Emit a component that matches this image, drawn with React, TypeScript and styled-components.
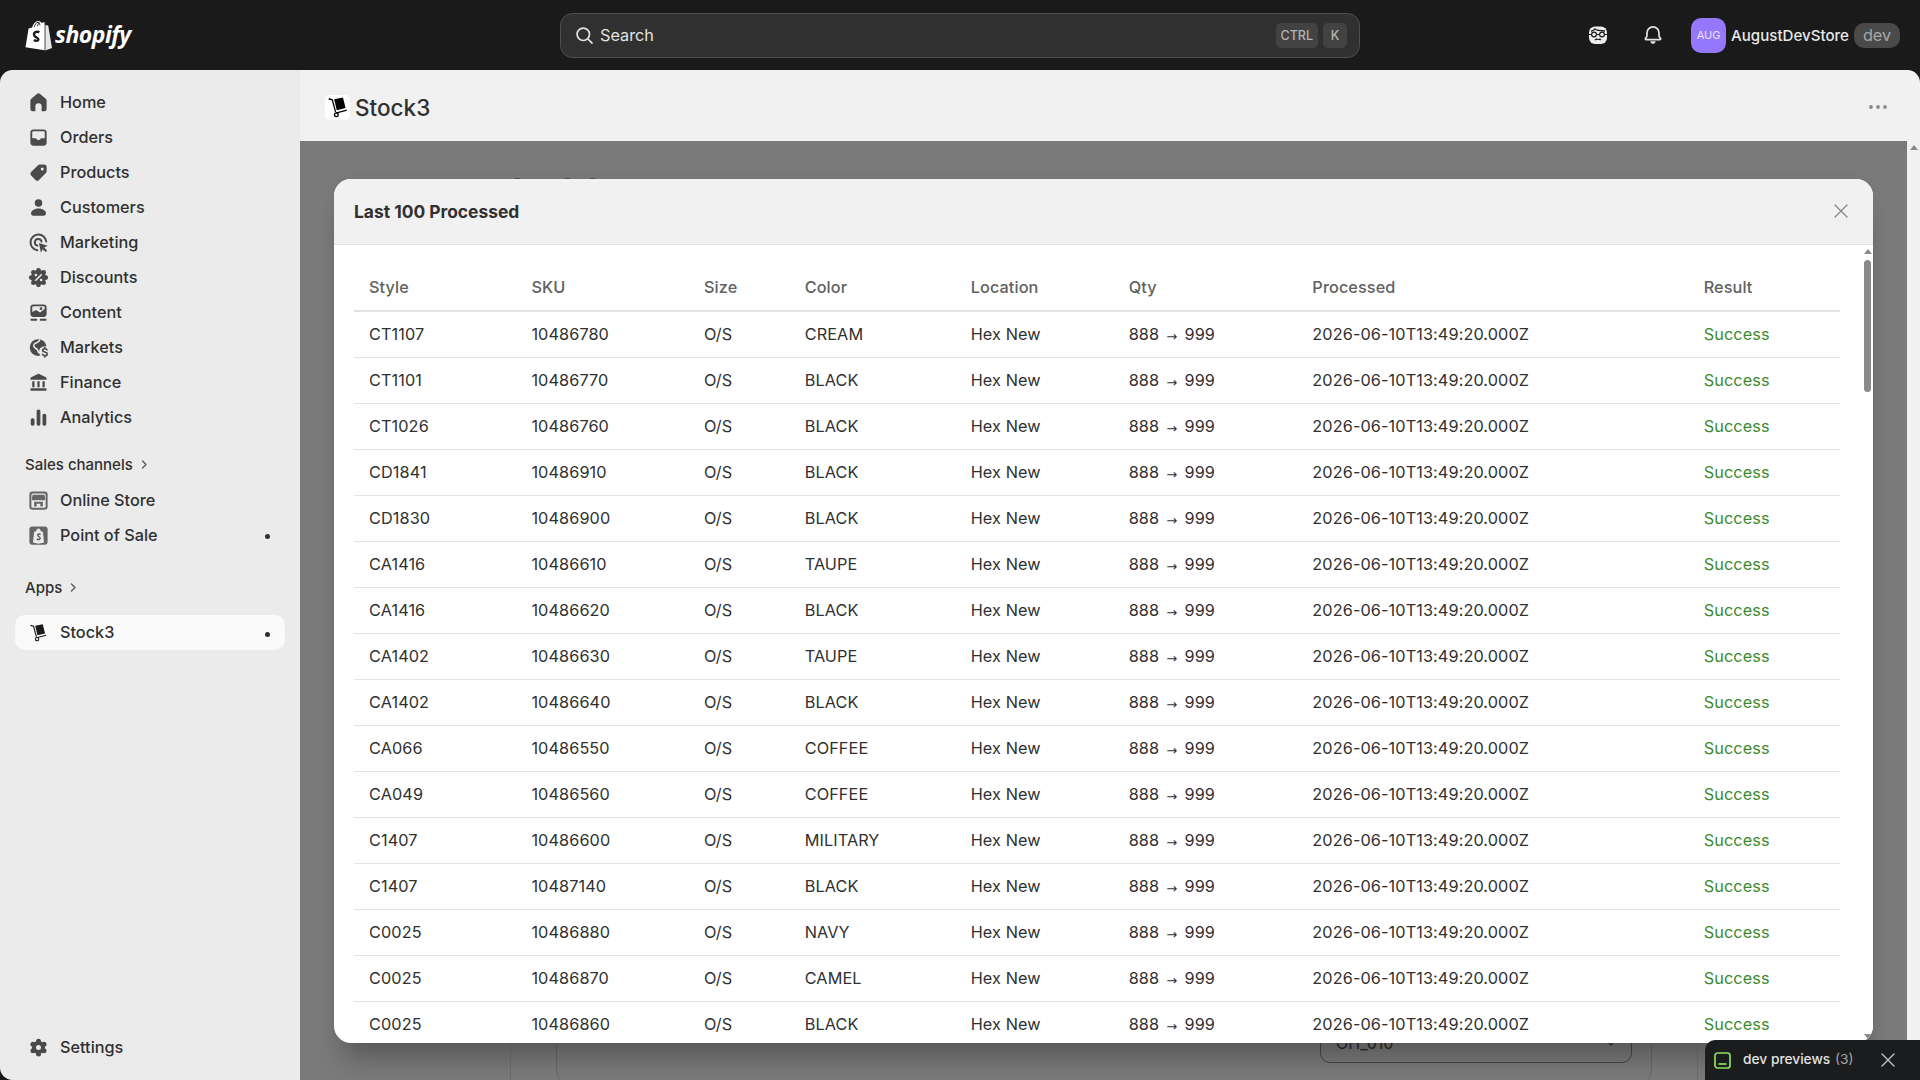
import React from "react";
import styled, { createGlobalStyle } from "styled-components";

const Global = createGlobalStyle`
  html, body { margin: 0; padding: 0; height: 100%; background: #1a1a1a; overflow: hidden; }
  body { font-family: Inter, "Liberation Sans", sans-serif; color: #303030; }
  #root { height: 100vh; }
  * { box-sizing: border-box; }
`;

const Shell = styled.div`
  display: flex;
  flex-direction: column;
  height: 100vh;
  background: #1a1a1a;
  overflow: hidden;
  position: relative;
`;

const TopBar = styled.header`
  height: 70px;
  flex: none;
  display: grid;
  grid-template-columns: 560px 800px 1fr;
  align-items: center;
`;

const Brand = styled.div`
  display: flex;
  align-items: center;
  gap: 3px;
  padding-left: 25px;
`;

const Wordmark = styled.span`
  font-family: "Open Sans", "Liberation Sans", sans-serif;
  font-style: italic;
  font-weight: 700;
  font-size: 23px;
  letter-spacing: -0.5px;
  color: #fff;
  line-height: 1;
  margin-top: -2px;
`;

const Search = styled.div`
  height: 45px;
  background: #303030;
  border: 1px solid #4f4f4f;
  border-radius: 12.5px;
  display: flex;
  align-items: center;
  padding: 0 12px 0 14px;
  gap: 6px;
  color: #e3e3e3;
  font-size: 16.25px;
  font-weight: 400;
`;

const SearchLabel = styled.span`
  flex: 1;
`;

const Kbd = styled.span`
  height: 25px;
  min-width: 24px;
  padding: 0 5px;
  display: flex;
  align-items: center;
  justify-content: center;
  border-radius: 5px;
  background: #424242;
  color: #b5b5b5;
  font-size: 12.5px;
  font-weight: 500;
  margin-left: -1px;
`;

const TopRight = styled.div`
  display: flex;
  align-items: center;
  justify-content: flex-end;
  padding-right: 20px;
`;

const TopIcon = styled.span`
  width: 40px;
  height: 40px;
  display: flex;
  align-items: center;
  justify-content: center;
  margin-right: 15px;
`;

const Avatar = styled.span`
  width: 35px;
  height: 35px;
  border-radius: 10px;
  background: #9577fb;
  color: #ece6ff;
  font-size: 11px;
  font-weight: 400;
  display: flex;
  align-items: center;
  justify-content: center;
  margin-left: 3px;
`;

const StoreName = styled.span`
  color: #e8e8e8;
  font-size: 15.1px;
  font-weight: 550;
  margin-left: 5px;
`;

const DevChip = styled.span`
  height: 25px;
  width: 46px;
  border-radius: 10px;
  background: #4a4a4a;
  color: #a8a8a8;
  font-size: 16.25px;
  display: flex;
  align-items: center;
  justify-content: center;
  margin-left: 5px;
`;

const Body = styled.div`
  flex: 1;
  min-height: 0;
  display: flex;
`;

const Sidebar = styled.nav`
  width: 300px;
  flex: none;
  background: #ebebeb;
  border-radius: 12.5px 0 0 12.5px;
  display: flex;
  flex-direction: column;
  padding: 14.5px 0 15.5px;
`;

const NavRow = styled.div<{ $active?: boolean }>`
  height: 35px;
  flex: none;
  margin: 0 15px;
  padding: 0 10px 0 10.5px;
  display: flex;
  align-items: center;
  gap: 9.5px;
  border-radius: 10px;
  font-size: 16.25px;
  font-weight: ${(p) => (p.$active ? 550 : 450)};
  color: #303030;
  background: ${(p) => (p.$active ? "#fafafa" : "transparent")};
`;

const NavIcon = styled.span`
  width: 25px;
  height: 25px;
  flex: none;
  display: flex;
  align-items: center;
  justify-content: center;
`;

const NavLabel = styled.span`
  flex: 1;
  margin-top: -1px;
`;

const NavDot = styled.span`
  width: 5px;
  height: 5px;
  border-radius: 50%;
  background: #303030;
  margin-right: 5.5px;
  margin-top: 3px;
`;

const SectionHead = styled.div<{ $top: number; $bottom: number }>`
  height: 30px;
  flex: none;
  margin: ${(p) => p.$top}px 0 ${(p) => p.$bottom}px;
  padding: 0 0 1px 25px;
  display: flex;
  align-items: center;
  gap: 7px;
  font-size: 15px;
  font-weight: 500;
  color: #303030;
`;

const Spacer = styled.div`
  flex: 1;
`;

const Main = styled.main`
  flex: 1;
  min-width: 0;
  display: flex;
  flex-direction: column;
  background: #f1f1f1;
  border-top-right-radius: 12.5px;
  overflow: hidden;
`;

const TitleBar = styled.div`
  height: 71px;
  flex: none;
  display: flex;
  align-items: center;
  padding: 3px 33px 0 25px;
  gap: 5px;
`;

const AppTile = styled.span`
  width: 25px;
  height: 25px;
  background: #fff;
  border-radius: 5px;
  display: flex;
  align-items: center;
  justify-content: center;
`;

const PageTitle = styled.h1`
  margin: 0;
  flex: 1;
  font-size: 22.5px;
  font-weight: 500;
  color: #303030;
`;

const Content = styled.div`
  flex: 1;
  min-height: 0;
  display: flex;
`;

const Backdrop = styled.div`
  flex: 1;
  min-width: 0;
  position: relative;
  background: #7a7a7a;
  padding-left: 210px;
  overflow: hidden;
  display: flex;
  align-items: flex-end;
`;

const PageColumn = styled.div`
  width: 1188px;
  height: 300px;
  border-left: 1px solid #6e6e6e;
  border-right: 1px solid #6e6e6e;
  display: flex;
  flex-direction: column;
  justify-content: flex-end;
`;

const UnderCard = styled.div`
  margin: 0 45px -5px;
  height: 200px;
  border: 1px solid #666;
  border-radius: 15px;
  padding: 0 19px 21px;
  display: flex;
  flex-direction: column;
  justify-content: flex-end;
  align-items: flex-end;
`;

const UnderSelect = styled.div`
  width: 312px;
  height: 40px;
  border: 1px solid #444;
  border-radius: 10px;
  display: flex;
  align-items: center;
  justify-content: space-between;
  padding: 0 15px;
  font-size: 16px;
  color: #222;
`;

const Speck = styled.span<{ $left: number }>`
  position: absolute;
  top: 36.5px;
  left: ${(p) => p.$left}px;
  width: 7px;
  height: 3px;
  border-radius: 50%;
  background: #4a4a4a;
`;

const Modal = styled.section`
  position: absolute;
  left: 34px;
  right: 34px;
  top: 38px;
  bottom: 37px;
  background: #fff;
  border-radius: 17px;
  overflow: hidden;
  display: flex;
  flex-direction: column;
`;

const ModalShadow = styled.div`
  position: absolute;
  left: 34px;
  right: 34px;
  top: 38px;
  bottom: 37px;
  border-radius: 17px;
  box-shadow: 0 25px 25px -10px rgba(26, 26, 26, 0.32), 0 0 12px rgba(26, 26, 26, 0.05);
`;

const ModalHeader = styled.div`
  height: 66px;
  flex: none;
  background: #f1f1f1;
  border-bottom: 1.5px solid #e3e3e3;
  display: flex;
  align-items: center;
  justify-content: space-between;
  padding: 0 25.5px 1px 20px;
`;

const ModalTitle = styled.h2`
  margin: 0;
  font-size: 17.4px;
  font-weight: 650;
  color: #303030;
`;

const ModalBody = styled.div`
  flex: 1;
  min-height: 0;
  display: flex;
`;

const TableArea = styled.div`
  flex: 1;
  min-width: 0;
  padding: 20px 22px 0 20px;
  overflow: hidden;
`;

const Table = styled.table`
  width: 1486px;
  table-layout: fixed;
  border-collapse: collapse;
`;

const Th = styled.th`
  height: 46px;
  padding: 0 15px 2px;
  text-align: left;
  font-size: 16.25px;
  font-weight: 550;
  letter-spacing: 0.1px;
  color: #616161;
  border-bottom: 2.5px solid #e3e3e3;
`;

const Td = styled.td<{ $success?: boolean }>`
  height: 46px;
  padding: 0 15px;
  font-size: 16.25px;
  font-weight: 400;
  letter-spacing: 0.1px;
  white-space: nowrap;
  color: ${(p) => (p.$success ? "#3c8a2e" : "#303030")};
  border-bottom: 1.25px solid #e3e3e3;
`;

const QtyArrow = styled.span`
  display: inline-block;
  width: 16px;
  text-align: center;
  font-family: "DejaVu Sans", sans-serif;
  font-size: 13px;
  position: relative;
  top: 1px;
`;

const Track = styled.div<{ $width: number; $bg: string }>`
  width: ${(p) => p.$width}px;
  flex: none;
  background: ${(p) => p.$bg};
  display: flex;
  flex-direction: column;
  align-items: center;
  position: relative;
`;

const ArrowUp = styled.span`
  margin-top: 4px;
  width: 0;
  height: 0;
  border-left: 4.5px solid transparent;
  border-right: 4.5px solid transparent;
  border-bottom: 5px solid #8a8a8a;
`;

const ArrowDown = styled.span`
  position: absolute;
  bottom: 4px;
  width: 0;
  height: 0;
  border-left: 4.5px solid transparent;
  border-right: 4.5px solid transparent;
  border-top: 5px solid #8a8a8a;
`;

const Thumb = styled.span`
  width: 7px;
  height: 132px;
  margin-top: 6px;
  border-radius: 4px;
  background: #8a8a8a;
`;

const DevBar = styled.div`
  position: absolute;
  right: 0;
  bottom: 0;
  width: 215px;
  height: 40px;
  background: #1a1c1d;
  border-top-left-radius: 10px;
  display: flex;
  align-items: center;
  padding: 0 25px 0 9px;
  color: #e3e3e3;
  font-size: 13.75px;
  font-weight: 500;
  gap: 12px;
`;

const DevText = styled.span`
  flex: 1;
  white-space: nowrap;
  margin-top: -2px;
`;

const DevCount = styled.span`
  color: #a6a6a6;
  font-weight: 400;
  margin-left: 1px;
`;

const I = { width: 25, height: 25, viewBox: "0 0 20 20", fill: "#4a4a4a" } as const;

const HomeIcon = () => (
  <svg {...I}><path d="M8.7 3.1a2 2 0 0 1 2.6 0l4.5 3.9c.5.4.7 1 .7 1.6V15a2 2 0 0 1-2 2h-1.5a.5.5 0 0 1-.5-.5V13a2.5 2.5 0 0 0-5 0v3.5a.5.5 0 0 1-.5.5H5.5a2 2 0 0 1-2-2V8.6c0-.6.3-1.2.7-1.6z" /></svg>
);
const OrdersIcon = () => (
  <svg {...I}><path fillRule="evenodd" d="M6 3.5h8A2.5 2.5 0 0 1 16.5 6v8a2.5 2.5 0 0 1-2.5 2.5H6A2.5 2.5 0 0 1 3.5 14V6A2.5 2.5 0 0 1 6 3.5zM6 5a1 1 0 0 0-1 1v4.5h2.5c.5 0 .8.3 1 .7.2.5.8.8 1.5.8s1.3-.3 1.5-.8c.2-.4.5-.7 1-.7H15V6a1 1 0 0 0-1-1z" /></svg>
);
const ProductsIcon = () => (
  <svg {...I}><path fillRule="evenodd" d="M11 3.5h3.5a2 2 0 0 1 2 2V9a2 2 0 0 1-.6 1.4l-5.5 5.5a2 2 0 0 1-2.8 0l-3.5-3.5a2 2 0 0 1 0-2.8l5.5-5.5A2 2 0 0 1 11 3.5zM13 5.9a1.2 1.2 0 1 0 0 2.4 1.2 1.2 0 0 0 0-2.4z" /></svg>
);
const CustomersIcon = () => (
  <svg {...I}><circle cx="10" cy="6.3" r="3" /><path d="M10 10.8c-3.5 0-6 1.9-6 4 0 1 .8 1.7 1.8 1.7h8.4c1 0 1.8-.7 1.8-1.7 0-2.1-2.5-4-6-4z" /></svg>
);
const MarketingIcon = () => (
  <svg {...I}>
    <path d="M16.2 9.2A6.3 6.3 0 1 0 9 16.2" fill="none" stroke="#4a4a4a" strokeWidth="1.6" strokeLinecap="round" />
    <path d="M12.4 9.3A2.7 2.7 0 1 0 9.2 12.5" fill="none" stroke="#4a4a4a" strokeWidth="1.6" strokeLinecap="round" />
    <path d="M10.4 10.3l7 2.3-2.8 1.4 2.3 2.4-1.2 1.2-2.4-2.3-1.4 2.8z" />
  </svg>
);
const DiscountsIcon = () => (
  <svg {...I}>
    <circle cx="10" cy="10" r="6" />
    {[0, 45, 90, 135, 180, 225, 270, 315].map((a) => (
      <circle key={a} cx={10 + 5.8 * Math.cos((a * Math.PI) / 180)} cy={10 + 5.8 * Math.sin((a * Math.PI) / 180)} r="1.9" />
    ))}
    <path d="M12.2 7.8l-4.4 4.4" stroke="#ebebeb" strokeWidth="1.3" strokeLinecap="round" />
    <circle cx="7.9" cy="8" r="1" fill="#ebebeb" />
    <circle cx="12.1" cy="12" r="1" fill="#ebebeb" />
  </svg>
);
const ContentIcon = () => (
  <svg {...I}>
    <path fillRule="evenodd" d="M6 3.5h8A2.5 2.5 0 0 1 16.5 6v5a2.5 2.5 0 0 1-2.5 2.5H6A2.5 2.5 0 0 1 3.5 11V6A2.5 2.5 0 0 1 6 3.5zM6 5a1 1 0 0 0-1 1v3.5l3-1.6 3.3 2.1 3.7-3V6a1 1 0 0 0-1-1z" />
    <circle cx="12" cy="6.9" r="1.1" fill="#4a4a4a" />
    <rect x="3.5" y="15" width="5.5" height="1.5" rx=".75" />
    <rect x="11" y="15" width="5.5" height="1.5" rx=".75" />
  </svg>
);
const MarketsIcon = () => (
  <svg {...I}>
    <circle cx="9.7" cy="10" r="6.7" />
    <path d="M11.2 3.6c-.5 1.4-1.3 2.3-2.7 2.6-1.7.4-2.7 1.6-2.2 3 .6 1.6 2.6 1.6 3 3 .2.8.6 1.7 1.3 2.5" fill="none" stroke="#ebebeb" strokeWidth="1.2" />
    <circle cx="15" cy="13.5" r="4.6" fill="#ebebeb" />
    <path d="M16.8 11.9c-.3-.6-.9-.9-1.7-.9-1 0-1.8.5-1.8 1.3 0 1.8 3.7.9 3.7 2.8 0 .8-.8 1.4-1.9 1.4-.9 0-1.6-.4-1.9-1.1M15 10v1M15 16.5v1" fill="none" stroke="#4a4a4a" strokeWidth="1.3" strokeLinecap="round" />
  </svg>
);
const FinanceIcon = () => (
  <svg {...I}>
    <path d="M9.4 3.2c.4-.2.8-.2 1.2 0l5.2 2.6c.6.3.7 1 .7 1.6v.3H3.5v-.3c0-.6.1-1.3.7-1.6z" />
    <rect x="5" y="9" width="1.8" height="4.8" />
    <rect x="9.1" y="9" width="1.8" height="4.8" />
    <rect x="13.2" y="9" width="1.8" height="4.8" />
    <rect x="3.5" y="14.5" width="13" height="2" rx=".7" />
  </svg>
);
const AnalyticsIcon = () => (
  <svg {...I}>
    <rect x="3.8" y="10.5" width="3" height="6" rx="1.3" />
    <rect x="8.5" y="3.5" width="3" height="13" rx="1.3" />
    <rect x="13.2" y="7" width="3" height="9.5" rx="1.3" />
  </svg>
);
const OnlineStoreIcon = () => (
  <svg {...I}>
    <rect x="2.7" y="2.7" width="14.6" height="14.6" rx="2.4" fill="#666" />
    <rect x="4.3" y="4.3" width="11.4" height="11.4" rx="1.2" fill="#ebebeb" />
    <path d="M5.3 5.3h9.4l.7 3a1.6 1.6 0 0 1-2.9 1 1.9 1.9 0 0 1-2.5 0 1.9 1.9 0 0 1-2.5 0 1.6 1.6 0 0 1-2.9-1z" fill="#666" />
    <path d="M6.5 10.9h7v3.8h-2v-2.1h-3v2.1h-2z" fill="#666" />
  </svg>
);
const PosIcon = () => (
  <svg {...I}>
    <rect x="2.7" y="2.7" width="14.6" height="14.6" rx="2.4" fill="#666" />
    <path d="M6.5 7l1.6-.4C8.4 5 9.2 4.4 10 4.4s1.6.6 1.9 2.2l1.6.4.9 8.6-4.4 1-4.4-1z" fill="#ebebeb" />
    <path d="M11.3 9c-.4-.3-1.9-.4-1.9.7 0 1.2 1.9 1 1.9 2.4 0 1.2-1.4 1.4-2.3.8" fill="none" stroke="#555" strokeWidth="1.1" strokeLinecap="round" />
  </svg>
);
const TruckIcon = ({ size = 25, color = "#1a1a1a" }: { size?: number; color?: string }) => (
  <svg width={size} height={size} viewBox="0 0 20 20" fill={color}>
    <path d="M1.5 2.5l3.3 1 3 11" fill="none" stroke={color} strokeWidth="1.2" />
    <path d="M6.5 3l8-1.7 2.4 9.7-8 2z" />
    <path d="M8 15.5l10-2.6" fill="none" stroke={color} strokeWidth="1.2" />
    <circle cx="8.5" cy="17" r="1.7" fill="none" stroke={color} strokeWidth="1.2" />
  </svg>
);
const SettingsIcon = () => (
  <svg {...I}>
    <circle cx="10" cy="10" r="5.2" />
    {[30, 90, 150, 210, 270, 330].map((a) => (
      <circle key={a} cx={10 + 5.1 * Math.cos((a * Math.PI) / 180)} cy={10 + 5.1 * Math.sin((a * Math.PI) / 180)} r="2" />
    ))}
    <circle cx="10" cy="10" r="2" fill="#ebebeb" />
  </svg>
);
const Chevron = () => (
  <svg width="9" height="11" viewBox="0 0 9 11" fill="none" stroke="#5c5c5c" strokeWidth="1.4" strokeLinecap="round" strokeLinejoin="round">
    <path d="M2.5 2l3.5 3.5L2.5 9" />
  </svg>
);

const BagLogo = () => (
  <svg width="27" height="31" viewBox="0 0 27 31">
    <path d="M.5 27.2L3.6 8.6l3.6-1.1C8 3.9 10.6.9 13.5.9c1.4 0 2.3.8 2.8 1.9l3.3-.6v28.1z" fill="#fff" />
    <path d="M20.4 5.1l2.8.3L27 28l-6.6 2.6z" fill="#e6e6e6" />
    <path d="M9.2 7.2c.5-2.5 2.2-4.9 4-4.9 1.3 0 1.6 1.6 1.6 3.1M12.3 6.3c.4-1.6 1.2-3 2.2-3.6" fill="none" stroke="#1a1a1a" strokeWidth=".9" />
    <path d="M14.4 12.1c-1.5-.8-5.4-.5-5.4 2.4 0 2.9 4.4 2.9 4.4 5 0 1.8-2.5 1.8-4.6.5" fill="none" stroke="#1a1a1a" strokeWidth="2.4" />
  </svg>
);
const SearchIcon = () => (
  <svg width="19" height="19" viewBox="0 0 19 19" fill="none" stroke="#e3e3e3" strokeWidth="1.7" strokeLinecap="round">
    <circle cx="8.3" cy="8.3" r="6.2" />
    <path d="M13 13l4 4.2" />
  </svg>
);
const FaceIcon = () => (
  <svg width="20" height="20" viewBox="0 0 20 20">
    <rect x="1" y="1.5" width="18" height="17.5" rx="6" fill="#ececec" />
    <path d="M3 6.2c1.5-.2 3-1 3.8-2.2 1.8 1.4 6 1.8 10.2 2" fill="none" stroke="#1a1a1a" strokeWidth="1.3" />
    <circle cx="6" cy="9.5" r="2.4" fill="#ececec" stroke="#1a1a1a" strokeWidth="1.2" />
    <circle cx="14" cy="9.5" r="2.4" fill="#ececec" stroke="#1a1a1a" strokeWidth="1.2" />
    <path d="M1 9.5h2.6M8.4 9.5h3.2M16.4 9.5H19" stroke="#1a1a1a" strokeWidth="1.2" />
    <path d="M6.4 15c1.2-1.5 2.5-1.8 3.6-.9 1.1-.9 2.4-.6 3.6.9-1.4.4-2.6.2-3.6-.3-1 .5-2.2.7-3.6.3z" fill="#1a1a1a" />
  </svg>
);
const BellIcon = () => (
  <svg width="20" height="21" viewBox="0 0 20 21">
    <path d="M10 1.9a6 6 0 0 0-6 6v2.6c0 1-.6 1.9-1.4 2.7-.6.6-.2 1.5.6 1.5h13.6c.8 0 1.2-.9.6-1.5-.8-.8-1.4-1.7-1.4-2.7V7.9a6 6 0 0 0-6-6z" fill="none" stroke="#e3e3e3" strokeWidth="1.7" />
    <path d="M7.3 16.2h5.4c-.2 1.5-1.3 2.6-2.7 2.6s-2.5-1.1-2.7-2.6z" fill="#e3e3e3" />
  </svg>
);
const CloseIcon = ({ size, color }: { size: number; color: string }) => (
  <svg width={size} height={size} viewBox="0 0 14 14" fill="none" stroke={color} strokeWidth="1.4" strokeLinecap="round">
    <path d="M1 1l12 12M13 1L1 13" />
  </svg>
);
const DotsIcon = () => (
  <svg width="18" height="4" viewBox="0 0 18 4" fill="#8a8a8a">
    <circle cx="2" cy="2" r="1.9" />
    <circle cx="9" cy="2" r="1.9" />
    <circle cx="16" cy="2" r="1.9" />
  </svg>
);
const PreviewIcon = () => (
  <svg width="17" height="17" viewBox="0 0 17 17" fill="none" stroke="#8ee05e" strokeWidth="1.7">
    <rect x="1" y="1" width="15" height="15" rx="2.5" />
    <path d="M4.5 12h8" />
  </svg>
);
const SelectChevron = () => (
  <svg width="10" height="6" viewBox="0 0 10 6" fill="none" stroke="#333" strokeWidth="1.3" strokeLinecap="round">
    <path d="M1 1l4 4 4-4" />
  </svg>
);

const mainNav: [string, React.ReactNode][] = [
  ["Home", <HomeIcon />],
  ["Orders", <OrdersIcon />],
  ["Products", <ProductsIcon />],
  ["Customers", <CustomersIcon />],
  ["Marketing", <MarketingIcon />],
  ["Discounts", <DiscountsIcon />],
  ["Content", <ContentIcon />],
  ["Markets", <MarketsIcon />],
  ["Finance", <FinanceIcon />],
  ["Analytics", <AnalyticsIcon />],
];

const columns: [string, number][] = [
  ["Style", 162.4],
  ["SKU", 172.6],
  ["Size", 100.7],
  ["Color", 166],
  ["Location", 158],
  ["Qty", 183.7],
  ["Processed", 391.3],
  ["Result", 151.3],
];

const rows: [string, string, string][] = [
  ["CT1107", "10486780", "CREAM"],
  ["CT1101", "10486770", "BLACK"],
  ["CT1026", "10486760", "BLACK"],
  ["CD1841", "10486910", "BLACK"],
  ["CD1830", "10486900", "BLACK"],
  ["CA1416", "10486610", "TAUPE"],
  ["CA1416", "10486620", "BLACK"],
  ["CA1402", "10486630", "TAUPE"],
  ["CA1402", "10486640", "BLACK"],
  ["CA066", "10486550", "COFFEE"],
  ["CA049", "10486560", "COFFEE"],
  ["C1407", "10486600", "MILITARY"],
  ["C1407", "10487140", "BLACK"],
  ["C0025", "10486880", "NAVY"],
  ["C0025", "10486870", "CAMEL"],
  ["C0025", "10486860", "BLACK"],
];

export default function App() {
  return (
    <Shell>
      <Global />
      <TopBar>
        <Brand>
          <BagLogo />
          <Wordmark>shopify</Wordmark>
        </Brand>
        <Search>
          <SearchIcon />
          <SearchLabel>Search</SearchLabel>
          <Kbd>CTRL</Kbd>
          <Kbd>K</Kbd>
        </Search>
        <TopRight>
          <TopIcon><FaceIcon /></TopIcon>
          <TopIcon><BellIcon /></TopIcon>
          <Avatar>AUG</Avatar>
          <StoreName>AugustDevStore</StoreName>
          <DevChip>dev</DevChip>
        </TopRight>
      </TopBar>
      <Body>
        <Sidebar>
          {mainNav.map(([label, icon]) => (
            <NavRow key={label}>
              <NavIcon>{icon}</NavIcon>
              <NavLabel>{label}</NavLabel>
            </NavRow>
          ))}
          <SectionHead $top={15.5} $bottom={2.5}>Sales channels <Chevron /></SectionHead>
          <NavRow>
            <NavIcon><OnlineStoreIcon /></NavIcon>
            <NavLabel>Online Store</NavLabel>
          </NavRow>
          <NavRow>
            <NavIcon><PosIcon /></NavIcon>
            <NavLabel>Point of Sale</NavLabel>
            <NavDot />
          </NavRow>
          <SectionHead $top={20.5} $bottom={12}>Apps <Chevron /></SectionHead>
          <NavRow $active>
            <NavIcon><TruckIcon size={19} /></NavIcon>
            <NavLabel>Stock3</NavLabel>
            <NavDot />
          </NavRow>
          <Spacer />
          <NavRow>
            <NavIcon><SettingsIcon /></NavIcon>
            <NavLabel>Settings</NavLabel>
          </NavRow>
        </Sidebar>
        <Main>
          <TitleBar>
            <AppTile><TruckIcon size={22} color="#000" /></AppTile>
            <PageTitle>Stock3</PageTitle>
            <DotsIcon />
          </TitleBar>
          <Content>
            <Backdrop>
              <PageColumn>
                <UnderCard>
                  <UnderSelect>
                    <span>OH_010</span>
                    <SelectChevron />
                  </UnderSelect>
                </UnderCard>
              </PageColumn>
              <Speck $left={214} />
              <Speck $left={264} />
              <Speck $left={289} />
              <ModalShadow />
              <Modal>
                <ModalHeader>
                  <ModalTitle>Last 100 Processed</ModalTitle>
                  <CloseIcon size={14} color="#8a8a8a" />
                </ModalHeader>
                <ModalBody>
                  <TableArea>
                    <Table>
                      <colgroup>
                        {columns.map(([name, w]) => (
                          <col key={name} width={w} />
                        ))}
                      </colgroup>
                      <thead>
                        <tr>
                          {columns.map(([name]) => (
                            <Th key={name}>{name}</Th>
                          ))}
                        </tr>
                      </thead>
                      <tbody>
                        {rows.map(([style, sku, color], i) => (
                          <tr key={i}>
                            <Td>{style}</Td>
                            <Td>{sku}</Td>
                            <Td>O/S</Td>
                            <Td>{color}</Td>
                            <Td>Hex New</Td>
                            <Td>888 <QtyArrow>→</QtyArrow> 999</Td>
                            <Td>2026-06-10T13:49:20.000Z</Td>
                            <Td $success>Success</Td>
                          </tr>
                        ))}
                      </tbody>
                    </Table>
                  </TableArea>
                  <Track $width={11} $bg="#fff">
                    <ArrowUp />
                    <Thumb />
                    <ArrowDown />
                  </Track>
                </ModalBody>
              </Modal>
            </Backdrop>
            <Track $width={13} $bg="#f1f1f1">
              <ArrowUp />
            </Track>
          </Content>
        </Main>
      </Body>
      <DevBar>
        <PreviewIcon />
        <DevText>dev previews <DevCount>(3)</DevCount></DevText>
        <CloseIcon size={14} color="#c4c4c4" />
      </DevBar>
    </Shell>
  );
}
